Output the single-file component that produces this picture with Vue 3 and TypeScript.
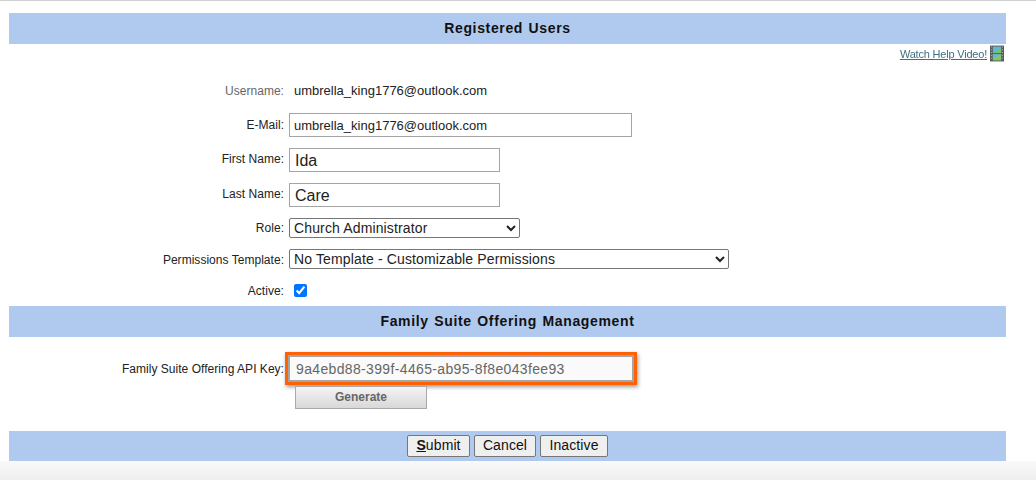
<script setup lang="ts">
import { ref } from 'vue'
const active = ref(true)
</script>

<template>
  <div class="page">
    <div class="band band-top"><h1>Registered Users</h1></div>
    <div class="help">
      <a class="help-link">Watch Help Video!</a>
      <svg class="film" width="14" height="17" viewBox="0 0 15 17">
        <rect width="15" height="17" fill="#555a56" />
        <rect x="3" y="1" width="9" height="7" fill="#5fb7d4" />
        <path d="M3 8 L12 3 V8Z" fill="#79c06a" />
        <rect x="3" y="9" width="9" height="7" fill="#86c36a" />
        <path d="M3 9 H12 L3 14Z" fill="#5fb7d4" />
        <path d="M1 1.5h1M1 4.5h1M1 7.5h1M1 10.5h1M1 13.5h1M13 1.5h1M13 4.5h1M13 7.5h1M13 10.5h1M13 13.5h1" stroke="#c5c8c5" stroke-width="1" />
      </svg>
    </div>

    <div class="row row-user">
      <label class="lab muted down">Username:</label>
      <span class="val">umbrella_king1776@outlook.com</span>
    </div>
    <div class="row row-input">
      <label class="lab">E-Mail:</label>
      <input class="box box-email" value="umbrella_king1776@outlook.com" />
    </div>
    <div class="row row-input">
      <label class="lab up">First Name:</label>
      <input class="box box-name" value="Ida" />
    </div>
    <div class="row row-input">
      <label class="lab up">Last Name:</label>
      <input class="box box-name" value="Care" />
    </div>
    <div class="row row-select">
      <label class="lab">Role:</label>
      <select class="sel sel-role"><option>Church Administrator</option></select>
    </div>
    <div class="row row-select">
      <label class="lab down">Permissions Template:</label>
      <select class="sel sel-perm"><option>No Template - Customizable Permissions</option></select>
    </div>
    <div class="row row-check">
      <label class="lab down">Active:</label>
      <input v-model="active" class="check" type="checkbox" />
    </div>

    <div class="band band-mid"><h2>Family Suite Offering Management</h2></div>

    <div class="row row-api">
      <label class="lab">Family Suite Offering API Key:</label>
      <div class="highlight">
        <input class="box box-api" readonly value="9a4ebd88-399f-4465-ab95-8f8e043fee93" />
      </div>
    </div>
    <div class="row row-gen">
      <span></span>
      <button class="generate" type="button">Generate</button>
    </div>

    <div class="band band-actions">
      <button class="btn btn-submit" type="button"><u>S</u>ubmit</button>
      <button class="btn btn-cancel" type="button">Cancel</button>
      <button class="btn btn-inactive" type="button">Inactive</button>
    </div>
    <div class="foot"></div>
  </div>
</template>

<style>
html, body { margin: 0; background: #fff; }
</style>

<style scoped>
.page {
  width: 1036px;
  height: 480px;
  overflow: hidden;
  box-sizing: border-box;
  border-top: 1px solid #cfcfcf;
  padding-top: 12px;
  font-family: "Liberation Sans", Arial, sans-serif;
  color: #111;
}
.band {
  margin-left: 9px;
  width: 997px;
  background: #b0c9ee;
  display: flex;
  align-items: center;
  justify-content: center;
}
h1, h2 {
  margin: 0 0 2px;
  font-size: 14px;
  font-weight: 700;
  color: #111;
  letter-spacing: 0.65px;
  word-spacing: 1px;
}
.band-top { height: 31px; }
.band-mid { height: 31px; margin-top: 6px; }
.help {
  height: 17px;
  margin-top: 1px;
  width: 995px;
  margin-left: 9px;
  display: flex;
  justify-content: flex-end;
  align-items: center;
  gap: 3px;
}
.help-link {
  font-size: 11px;
  color: #3f6f80;
  text-decoration: underline;
  letter-spacing: -0.2px;
  filter: blur(0.4px);
}
.film { display: block; filter: blur(0.4px); }
.row {
  display: grid;
  grid-template-columns: 275px 1fr;
  column-gap: 5px;
  margin-left: 9px;
  align-items: center;
}
.lab {
  text-align: right;
  font-size: 12px;
  color: #222;
  letter-spacing: 0.03px;
}
.down { padding-top: 2px; }
.up { padding-bottom: 2px; }
.muted { color: #666; }
.val { font-size: 13px; margin-left: 5px; color: #222; }
.row-user { height: 24px; margin-top: 16px; }
.row-input { height: 24px; margin-top: 11px; }
.row-select { height: 20px; margin-top: 11px; }
.row-check { height: 20px; margin-top: 11px; }
.box {
  box-sizing: border-box;
  height: 24px;
  border: 1px solid #a5a5a5;
  background: #fff;
  padding: 0 4px;
  font-family: inherit;
  color: #222;
  outline: none;
  border-radius: 0;
}
.box-email { width: 343px; font-size: 13px; }
.box-name { width: 211px; font-size: 16px; padding: 2px 5px 0; }
.sel {
  box-sizing: border-box;
  height: 20px;
  border: 1px solid #767676;
  border-radius: 2px;
  background: #fff;
  font-family: inherit;
  font-size: 14px;
  letter-spacing: 0.14px;
  color: #222;
  padding: 0;
}
.sel-role { width: 231px; }
.sel-perm { width: 440px; }
.check {
  width: 13px;
  height: 13px;
  margin: 0 0 0 5px;
  accent-color: #0075ff;
}
.row-api { height: 33px; margin-top: 15px; align-items: start; }
.row-api .lab { margin-top: 10px; }
.highlight {
  width: 352px;
  height: 33px;
  margin-left: -4px;
  box-sizing: border-box;
  border: 3px solid #ff6105;
  box-shadow: 1px 2px 4px rgba(0, 0, 0, 0.4);
}
.box-api {
  display: block;
  width: 346px;
  height: 27px;
  background: #fafafa;
  border: 2px solid #a5a5a5;
  font-size: 14px;
  color: #666;
  padding: 0 6px;
  letter-spacing: 0.35px;
}
.row-gen { height: 23px; margin-top: 1px; }
.generate {
  box-sizing: border-box;
  width: 132px;
  height: 23px;
  margin-left: 6px;
  border: 1px solid #a9a9a9;
  background: linear-gradient(#f4f4f4, #d8d8d8);
  font-family: inherit;
  font-size: 12px;
  font-weight: 700;
  color: #666;
  padding: 0 0 2px;
}
.band-actions { height: 30px; margin-top: 22px; gap: 4px; }
.btn {
  box-sizing: border-box;
  height: 22px;
  border: 1px solid #767676;
  border-radius: 2px;
  background: #efefef;
  font-family: inherit;
  font-size: 14px;
  letter-spacing: 0.1px;
  color: #111;
  padding: 0 0 2px;
}
.btn-submit { width: 63px; }
.btn-cancel { width: 62px; }
.btn-inactive { width: 68px; }
.btn u { font-weight: 700; }
.foot { height: 19px; background: linear-gradient(#f9f9f9, #efefef); }
</style>
